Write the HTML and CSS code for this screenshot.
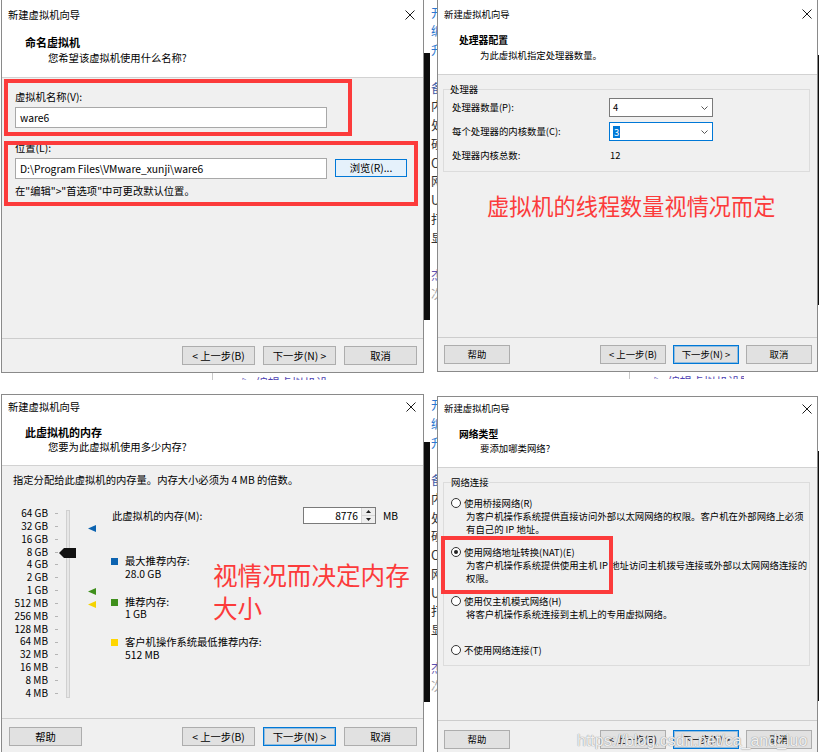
FILE: index.html
```html
<!DOCTYPE html>
<html>
<head>
<meta charset="utf-8">
<title>新建虚拟机向导</title>
<link rel="stylesheet" href="styles.css">
</head>
<body>
<main class="sheet">

  <!-- 1: name -->
  <section class="shot shot-tl">
    <div class="shot-row">
      <div class="dlg dlg-l dlg-tl">
        <div class="titlebar">
          <span>新建虚拟机向导</span>
          <svg class="close" viewBox="0 0 10 10"><path d="M0.5 0.5L9.5 9.5M9.5 0.5L0.5 9.5"/></svg>
        </div>
        <div class="hdr">
          <div class="hdr-title">命名虚拟机</div>
          <div class="hdr-sub">您希望该虚拟机使用什么名称?</div>
        </div>
        <div class="body name-body">
          <div class="lbl">虚拟机名称(V):</div>
          <div class="textbox">ware6</div>
          <div class="lbl loc-lbl">位置(L):</div>
          <div class="loc-row">
            <div class="textbox">D:\Program Files\VMware_xunji\ware6</div>
            <button class="btn btn-browse">浏览(R)...</button>
          </div>
          <div class="hint">在"编辑"&gt;"首选项"中可更改默认位置。</div>
          <div class="redbox rb-name"></div>
          <div class="redbox rb-loc"></div>
        </div>
        <div class="footer">
          <span class="spacer"></span>
          <button class="btn">&lt; 上一步(B)</button>
          <button class="btn">下一步(N) &gt;</button>
          <button class="btn">取消</button>
        </div>
      </div>
      <div class="dark dark-tl"></div>
    </div>
    <div class="under under-tl"><div class="under-pane">▷ 编辑虚拟机设置</div></div>
  </section>

  <!-- 2: processors -->
  <section class="shot shot-tr">
    <div class="shot-row">
      <div class="side side-tr">
        <span class="c-blue">开</span><span class="c-blue">编</span><span class="c-blue">升</span><span></span>
        <span class="c-navy">备</span><span>内</span><span>处</span><span>硬</span><span>C</span><span>网</span><span>U</span><span>打</span><span>显</span><span></span>
        <span class="c-purple">杰</span><span class="c-gray">次</span>
      </div>
      <div class="dlg dlg-r dlg-tr">
        <div class="titlebar">
          <span>新建虚拟机向导</span>
          <svg class="close" viewBox="0 0 10 10"><path d="M0.5 0.5L9.5 9.5M9.5 0.5L0.5 9.5"/></svg>
        </div>
        <div class="hdr">
          <div class="hdr-title">处理器配置</div>
          <div class="hdr-sub">为此虚拟机指定处理器数量。</div>
        </div>
        <div class="body">
          <fieldset class="group cpu-group">
            <legend>处理器</legend>
            <div class="cpu-grid">
              <span>处理器数量(P):</span>
              <div class="select"><span>4</span><svg class="chev" viewBox="0 0 7 4"><path d="M0.5 0.5L3.5 3.5L6.5 0.5"/></svg></div>
              <span>每个处理器的内核数量(C):</span>
              <div class="select select-focus"><span class="sel-text">3</span><svg class="chev" viewBox="0 0 7 4"><path d="M0.5 0.5L3.5 3.5L6.5 0.5"/></svg></div>
              <span>处理器内核总数:</span>
              <span class="cpu-total">12</span>
            </div>
          </fieldset>
          <p class="note note-cpu">虚拟机的线程数量视情况而定</p>
        </div>
        <div class="footer">
          <button class="btn">帮助</button>
          <span class="spacer"></span>
          <button class="btn">&lt; 上一步(B)</button>
          <button class="btn btn-default">下一步(N) &gt;</button>
          <button class="btn">取消</button>
        </div>
      </div>
      <div class="dark dark-tr"></div>
    </div>
    <div class="under under-tr"><div class="under-pane">▷ 编辑虚拟机设置</div></div>
  </section>

  <!-- 3: memory -->
  <section class="shot shot-bl">
    <div class="shot-row">
      <div class="dlg dlg-l dlg-bl">
        <div class="titlebar">
          <span>新建虚拟机向导</span>
          <svg class="close" viewBox="0 0 10 10"><path d="M0.5 0.5L9.5 9.5M9.5 0.5L0.5 9.5"/></svg>
        </div>
        <div class="hdr">
          <div class="hdr-title">此虚拟机的内存</div>
          <div class="hdr-sub">您要为此虚拟机使用多少内存?</div>
        </div>
        <div class="body mem-body">
          <div class="mem-intro">指定分配给此虚拟机的内存量。内存大小必须为 4 MB 的倍数。</div>
          <div class="mem-wrap">
            <div class="scale">
              <div class="scale-labels">
                <span>64 GB</span><span>32 GB</span><span>16 GB</span><span>8 GB</span><span>4 GB</span>
                <span>2 GB</span><span>1 GB</span><span>512 MB</span><span>256 MB</span><span>128 MB</span>
                <span>64 MB</span><span>32 MB</span><span>16 MB</span><span>8 MB</span><span>4 MB</span>
              </div>
              <div class="scale-ticks"></div>
              <div class="scale-track"></div>
              <svg class="thumb" viewBox="0 0 17 10"><polygon points="0,5 5,0 17,0 17,10 5,10"/></svg>
              <svg class="tri tri-blue" viewBox="0 0 8 7"><polygon points="0,3.5 8,0 8,7"/></svg>
              <svg class="tri tri-green" viewBox="0 0 8 7"><polygon points="0,3.5 8,0 8,7"/></svg>
              <svg class="tri tri-yellow" viewBox="0 0 8 7"><polygon points="0,3.5 8,0 8,7"/></svg>
            </div>
            <div class="mem-info">
              <div class="mem-row">
                <span class="mem-row-label">此虚拟机的内存(M):</span>
                <div class="spin">
                  <span class="spin-val">8776</span>
                  <span class="spin-btns">
                    <span><svg viewBox="0 0 5 3"><polygon points="0,3 2.5,0 5,3"/></svg></span>
                    <span><svg viewBox="0 0 5 3"><polygon points="0,0 5,0 2.5,3"/></svg></span>
                  </span>
                </div>
                <span class="mem-unit">MB</span>
              </div>
              <div class="legend-item legend-first">
                <span class="swatch sw-blue"></span>
                <div>最大推荐内存:<br>28.0 GB</div>
              </div>
              <div class="legend-item">
                <span class="swatch sw-green"></span>
                <div>推荐内存:<br>1 GB</div>
              </div>
              <div class="legend-item">
                <span class="swatch sw-yellow"></span>
                <div>客户机操作系统最低推荐内存:<br>512 MB</div>
              </div>
            </div>
          </div>
          <p class="note note-mem">视情况而决定内存<br>大小</p>
        </div>
        <div class="footer">
          <button class="btn">帮助</button>
          <span class="spacer"></span>
          <button class="btn">&lt; 上一步(B)</button>
          <button class="btn btn-default">下一步(N) &gt;</button>
          <button class="btn">取消</button>
        </div>
      </div>
      <div class="dark dark-bl"></div>
    </div>
  </section>

  <!-- 4: network -->
  <section class="shot shot-br">
    <div class="shot-row">
      <div class="side side-br">
        <span class="c-blue">开</span><span class="c-blue">编</span><span class="c-blue">升</span><span></span>
        <span class="c-navy">备</span><span>内</span><span>处</span><span>硬</span><span>C</span><span>网</span><span>U</span><span>打</span><span>显</span><span></span>
        <span class="c-purple">杰</span><span class="c-gray">次</span>
      </div>
      <div class="dlg dlg-r dlg-br">
        <div class="titlebar">
          <span>新建虚拟机向导</span>
          <svg class="close" viewBox="0 0 10 10"><path d="M0.5 0.5L9.5 9.5M9.5 0.5L0.5 9.5"/></svg>
        </div>
        <div class="hdr">
          <div class="hdr-title">网络类型</div>
          <div class="hdr-sub">要添加哪类网络?</div>
        </div>
        <div class="body">
          <fieldset class="group net-group">
            <legend>网络连接</legend>
            <div class="opt opt-first">
              <div class="opt-line"><span class="radio"></span>使用桥接网络(R)</div>
              <div class="opt-desc">为客户机操作系统提供直接访问外部以太网网络的权限。客户机在外部网络上必须<br>有自己的 IP 地址。</div>
            </div>
            <div class="opt">
              <div class="opt-line"><span class="radio radio-on"></span>使用网络地址转换(NAT)(E)</div>
              <div class="opt-desc">为客户机操作系统提供使用主机 IP 地址访问主机拨号连接或外部以太网网络连接的<br>权限。</div>
            </div>
            <div class="opt">
              <div class="opt-line"><span class="radio"></span>使用仅主机模式网络(H)</div>
              <div class="opt-desc opt-desc-tall">将客户机操作系统连接到主机上的专用虚拟网络。</div>
            </div>
            <div class="opt">
              <div class="opt-line"><span class="radio"></span>不使用网络连接(T)</div>
            </div>
          </fieldset>
          <div class="redbox rb-nat"></div>
        </div>
        <div class="footer">
          <button class="btn">帮助</button>
          <span class="spacer"></span>
          <button class="btn">&lt; 上一步(B)</button>
          <button class="btn btn-default">下一步(N) &gt;</button>
          <button class="btn">取消</button>
          <span class="watermark">https://blog.csdn.net/ca_and_luo</span>
        </div>
      </div>
      <div class="dark dark-br"></div>
    </div>
  </section>

</main>
</body>
</html>
```

FILE: styles.css
```css
* { box-sizing: border-box; }
html, body { margin: 0; padding: 0; background: #fff; }
body {
  font-family: "Noto Sans CJK SC", "Noto Sans", sans-serif;
  font-size: 10.3px;
  line-height: 14px;
  color: #000;
}

.sheet {
  width: 819px;
  height: 752px;
  overflow: hidden;
  display: grid;
  grid-template-columns: 430px 389px;
  grid-template-rows: 385px 367px;
}

.shot { overflow: hidden; display: flex; flex-direction: column; min-width: 0; }
.shot-bl { padding-top: 9px; }
.shot-br { padding-top: 11px; }
.shot-row { display: flex; align-items: flex-start; flex: none; }
.shot-tl .shot-row, .shot-bl .shot-row { padding-left: 1px; }

/* dialog frame */
.dlg {
  flex: none;
  display: flex;
  flex-direction: column;
  background: #f0f0f0;
  border: 1px solid #8a8a8a;
}
.dlg-l { width: 423px; }
.dlg-r { width: 381px; font-size: 9.4px; line-height: 13px; }
.dlg-tl { height: 373px; border-top: 0; }
.dlg-tr { height: 372px; border-top: 0; }
.dlg-bl { height: 359px; }
.dlg-br { height: 361px; }

.titlebar {
  flex: none;
  display: flex;
  align-items: center;
  justify-content: space-between;
  background: #fff;
  padding: 0 7px 0 6px;
}
.dlg-tl .titlebar { height: 30px; padding-right: 8px; }
.dlg-tr .titlebar { height: 28px; padding-right: 5px; }
.dlg-bl .titlebar { height: 23px; }
.dlg-br .titlebar { height: 23px; padding-right: 5px; }
.close { width: 10px; height: 10px; fill: none; stroke: #1a1a1a; stroke-width: 1; }

.hdr {
  flex: none;
  background: #fff;
  border-bottom: 1px solid #d2d2d2;
  padding-left: 23px;
}
.dlg-r .hdr { padding-left: 21px; }
.hdr-title { font-weight: bold; font-size: 11px; line-height: 14px; }
.dlg-r .hdr-title { font-size: 9.8px; }
.hdr-sub { padding-left: 23px; line-height: 14px; margin-top: 1px; }
.dlg-r .hdr-sub { padding-left: 21px; }
.dlg-tl .hdr { height: 48px; padding-top: 5px; }
.dlg-tl .hdr-sub { margin-top: 2px; }
.dlg-tr .hdr { height: 47px; padding-top: 5px; }
.dlg-bl .hdr, .dlg-br .hdr { height: 48px; padding-top: 7px; }
.dlg-br .hdr-sub { margin-top: 0; }

.body { flex: 1; position: relative; min-height: 0; }

.footer {
  flex: none;
  height: 34px;
  border-top: 1px solid #cdcdcd;
  display: flex;
  align-items: flex-start;
  gap: 8px;
  padding: 7px 6px 0 7px;
}
.dlg-r .footer { gap: 7px; padding-left: 6px; padding-right: 5px; }
.dlg-bl .footer { padding-top: 8px; }
.dlg-br .footer { padding-top: 9px; height: 36px; position: relative; }
.spacer { flex: 1; }

.btn {
  flex: none;
  width: 73px;
  height: 19px;
  margin: 0;
  padding: 0;
  border: 1px solid #adadad;
  background: #e1e1e1;
  font: inherit;
  line-height: 17px;
  color: #000;
  text-align: center;
}
.dlg-r .btn { width: 66px; }
.btn-default { border-color: #0078d7; box-shadow: inset 0 0 0 1px rgba(0, 120, 215, 0.35); }

/* name page */
.name-body { padding: 12px 0 0 13px; }
.lbl { line-height: 14px; }
.textbox {
  width: 312px;
  height: 21px;
  margin-top: 3px;
  border: 1px solid #a8a8a8;
  background: #fff;
  padding-left: 4px;
  line-height: 19px;
  white-space: nowrap;
}
.loc-lbl { margin-top: 13px; }
.loc-row { display: flex; align-items: flex-start; margin-top: 3px; }
.loc-row .textbox { margin-top: 0; }
.btn-browse {
  width: 72px;
  height: 18px;
  line-height: 16px;
  margin: 1px 0 0 8px;
  border-color: #0078d7;
  background: #e5f1fb;
}
.hint { margin-top: 5px; line-height: 14px; }

.redbox { position: absolute; border: 4px solid #fc3b3b; pointer-events: none; }
.rb-name { left: 2px; top: 1px; width: 348px; height: 57px; }
.rb-loc { left: 2px; top: 63px; width: 414px; height: 65px; }
.rb-nat { left: 3px; top: 68px; width: 172px; height: 58px; }

/* group boxes */
.group {
  margin: 7px 0 0 5px;
  width: 367px;
  min-width: 0;
  border: 1px solid #dcdcdc;
  padding: 0 6px 6px;
}
.group legend { padding: 0; line-height: 14px; }

.cpu-grid {
  display: grid;
  grid-template-columns: 157px 104px;
  grid-auto-rows: 19px;
  row-gap: 5px;
  align-items: center;
  padding: 2px 0 0 2px;
}
.select {
  display: flex;
  align-items: center;
  height: 19px;
  border: 1px solid #7a7a7a;
  background: #fff;
  padding-left: 3px;
}
.select-focus { border-color: #0078d7; }
.sel-text { background: #0078d7; color: #fff; padding: 0 1px; line-height: 12px; }
.chev { margin-left: auto; margin-right: 4px; width: 7px; height: 4px; fill: none; stroke: #555; stroke-width: 1; }
.cpu-total { padding-left: 1px; }

.note { margin: 0; color: #fc3b3b; white-space: nowrap; }
.note-cpu { margin-top: 18px; padding-left: 49px; font-size: 22.2px; line-height: 30px; }
.note-mem { position: absolute; left: 211px; top: 92px; font-size: 24.6px; line-height: 33px; }

/* memory page */
.mem-body { padding: 7px 0 0 11px; }
.mem-intro { line-height: 14px; white-space: nowrap; }
.mem-wrap { display: flex; margin-top: 20px; }
.scale { position: relative; flex: none; width: 98px; display: flex; align-items: flex-start; }
.scale-labels { width: 35px; flex: none; text-align: right; font-size: 10px; }
.scale-labels span { display: block; height: 12.857px; line-height: 12.857px; white-space: nowrap; }
.scale-ticks {
  flex: none;
  width: 3px;
  height: 192.86px;
  margin-left: 7px;
  background: repeating-linear-gradient(to bottom, transparent 0, transparent 6px, #b5b5b5 6px, #b5b5b5 7px, transparent 7px, transparent 12.857px);
}
.scale-track {
  flex: none;
  width: 4px;
  height: 188px;
  margin: 3px 0 0 8px;
  background: #e7e7e7;
  border: 1px solid #d0d0d0;
}
.thumb { position: absolute; left: 46px; top: 41px; width: 17px; height: 10px; fill: #111; }
.tri { position: absolute; left: 75px; width: 8px; height: 7px; }
.tri-blue { top: 18px; fill: #0c63b0; }
.tri-green { top: 81px; fill: #3f8f1c; }
.tri-yellow { top: 94px; fill: #f4d300; }

.mem-info { flex: 1; }
.mem-row { display: flex; align-items: center; height: 17px; }
.mem-row-label { width: 192px; padding-left: 1px; }
.spin { display: flex; width: 73px; height: 17px; border: 1px solid #7a7a7a; background: #fff; }
.spin-val { flex: 1; text-align: right; padding-right: 3px; line-height: 15px; }
.spin-btns { width: 14px; display: flex; flex-direction: column; border-left: 1px solid #d6d6d6; }
.spin-btns span { flex: 1; display: flex; align-items: center; justify-content: center; background: #eeeeee; }
.spin-btns span + span { border-top: 1px solid #d6d6d6; }
.spin-btns svg { width: 5px; height: 3px; fill: #222; }
.mem-unit { margin-left: 7px; }

.legend-item { display: flex; margin-top: 15px; line-height: 12.8px; }
.legend-first { margin-top: 31px; }
.swatch { flex: none; width: 7px; height: 7px; margin: 3px 7px 0 0; }
.sw-blue { background: #0c63b0; }
.sw-green { background: #3f8f1c; }
.sw-yellow { background: #ffd600; }

/* network page */
.net-group { padding: 0 7px 8px; }
.opt { margin-top: 9px; }
.opt-first { margin-top: 7px; }
.opt-line { display: flex; align-items: center; height: 14px; white-space: nowrap; }
.radio {
  flex: none;
  width: 10px;
  height: 10px;
  margin-right: 3px;
  border: 1px solid #333;
  border-radius: 50%;
  background: #fff;
  display: flex;
  align-items: center;
  justify-content: center;
}
.radio-on::after { content: ""; width: 4px; height: 4px; border-radius: 50%; background: #222; }
.opt-desc { padding-left: 15px; line-height: 13px; white-space: nowrap; }
.opt-desc-tall { min-height: 26px; }

.watermark {
  position: absolute;
  left: 139px;
  top: 10px;
  font-family: "Liberation Sans", Arial, sans-serif;
  font-size: 16px;
  line-height: 20px;
  color: rgba(255, 255, 255, 0.85);
  text-shadow: 0 0 1px #9a9a9a, 0 0 1px #9a9a9a;
  white-space: nowrap;
  pointer-events: none;
}

/* glimpses of the window behind */
.side {
  flex: none;
  align-self: stretch;
  width: 7px;
  overflow: hidden;
  padding-left: 1px;
  font-size: 12.5px;
  line-height: 18.75px;
  color: #333;
}
.side span { display: block; height: 18.75px; white-space: nowrap; }
.side-tr { padding-top: 3.6px; }
.c-blue { color: #2b78d0; }
.c-navy { color: #3d5aa5; }
.c-purple { color: #5b4fb0; }
.c-gray { color: #a8a8a8; }

.dark { flex: none; width: 6px; background: #0d0d0d; }
.dark-tl { margin-top: 53px; height: 267px; }
.dark-bl { margin-top: 48px; height: 260px; }
.dark-tr, .dark-br { width: 1px; margin-top: 55px; height: 250px; }

.under { flex: none; height: 7px; overflow: hidden; }
.under-pane {
  height: 100%;
  border-left: 1px solid #c8c8c8;
  padding: 3px 0 0 28px;
  font-size: 12px;
  line-height: 14px;
  color: #4f43b3;
  white-space: nowrap;
  width: 115px;
  overflow: hidden;
}
.under-tl .under-pane { margin-left: 212px; }
.under-tr .under-pane { margin-left: 199px; padding-left: 23px; }
```
